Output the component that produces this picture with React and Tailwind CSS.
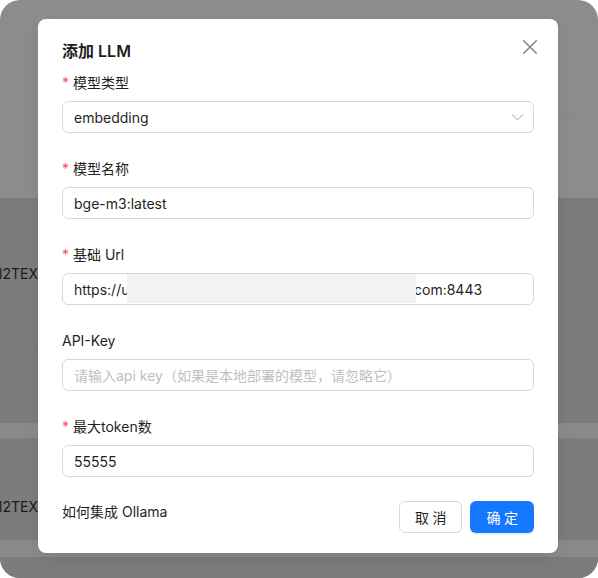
const font = { fontFamily: '"Inter", "Noto Sans CJK SC", "Noto Sans", sans-serif' };

const Label = ({ required, children }) => (
    <div className="flex items-center h-[22px] mb-2 text-[14px] text-[#1f1f1f]">
        {required && <span className="text-[#ff4d4f] mr-1 text-[14px] leading-none pt-[2px]">*</span>}
        {children}
    </div>
);

const Field = ({ label, required, children }) => (
    <div className="mb-6">
        <Label required={required}>{label}</Label>
        {children}
    </div>
);

const inputBox = 'relative h-8 w-full rounded-md border border-[#d9d9d9] bg-white px-[11px] flex items-center text-[14px] text-[#1f1f1f]';

export default function App() {
    return (
        <div className="w-[598px] h-[578px] bg-white" style={font}>
            <div className="relative w-full h-full rounded-[20px] overflow-hidden flex flex-col bg-[#8c8c8c]">
                {/* page behind the mask */}
                <div className="h-[115px] border-b border-[#868686]" />
                <div className="h-[83px]" />
                <div className="h-[150px] bg-[#7b7c7e] border-b border-[#757678] flex items-center">
                    <span className="text-[14px] text-[#1a1a1a] -ml-[1px] mt-[2px]">l2TEXT</span>
                </div>
                <div className="h-[75px] bg-[#7b7c7e]" />
                <div className="h-[15px] bg-[#8a8a8a]" />
                <div className="h-[102px] bg-[#7b7c7e] flex items-center">
                    <span className="text-[14px] text-[#1a1a1a] -ml-[1px] mt-[34px]">l2TEXT</span>
                </div>
                <div className="h-[17px] bg-[#8a8a8a]" />
                <div className="flex-1 bg-[#7b7c7e]" />

                {/* modal */}
                <div className="absolute left-[38px] top-[19px] w-[520px] h-[534px] rounded-lg bg-white px-6 pt-5 pb-5 shadow-[0_6px_16px_rgba(0,0,0,0.08)]">
                    <div className="relative flex items-center h-6 mb-2">
                        <h3 className="text-[16px] font-semibold text-[#1f1f1f]">添加 LLM</h3>
                        <svg className="absolute right-[-3px] top-[1px]" width="14" height="14" viewBox="0 0 14 14" fill="none">
                            <path d="M0.7 0.7L13.3 13.3M13.3 0.7L0.7 13.3" stroke="#7f7f7f" strokeWidth="1.4" strokeLinecap="round" />
                        </svg>
                    </div>

                    <Field label="模型类型" required>
                        <div className={`${inputBox} justify-between`}>
                            <span>embedding</span>
                            <svg width="11" height="7" viewBox="0 0 11 7" fill="none" className="mr-[-1px] mt-[1px]">
                                <path d="M0.6 0.8L5.5 5.9L10.4 0.8" stroke="#bfbfbf" strokeWidth="1.1" strokeLinecap="round" strokeLinejoin="round" />
                            </svg>
                        </div>
                    </Field>

                    <Field label="模型名称" required>
                        <div className={inputBox}>bge-m3:latest</div>
                    </Field>

                    <Field label="基础 Url" required>
                        <div className={`${inputBox} overflow-hidden`}>
                            <span className="whitespace-nowrap">https://u</span>
                            <span className="absolute left-[351px] top-0 bottom-0 flex items-center whitespace-nowrap">com:8443</span>
                            <div className="absolute left-[64px] top-0 bottom-[1px] w-[289px] bg-[#f2f2f2]" />
                        </div>
                    </Field>

                    <Field label="API-Key">
                        <div className={`${inputBox} text-[#bfbfbf]`}>
                            请输入api key（如果是本地部署的模型，请忽略它）
                        </div>
                    </Field>

                    <Field label="最大token数" required>
                        <div className={inputBox}>55555</div>
                    </Field>

                    <div className="flex items-start justify-between h-8">
                        <span className="text-[14px] leading-[22px] text-[#1f1f1f]">如何集成 Ollama</span>
                        <div className="flex gap-2">
                            <button className="h-8 w-[63px] rounded-md border border-[#d9d9d9] bg-white text-[14px] text-[#1f1f1f] tracking-[0.25em] pl-[4px]">
                                取消
                            </button>
                            <button className="h-8 w-[64px] rounded-md bg-[#1677ff] text-[14px] text-white tracking-[0.25em] pl-[4px] shadow-[0_2px_0_rgba(5,145,255,0.1)]">
                                确定
                            </button>
                        </div>
                    </div>
                </div>
            </div>
        </div>
    );
}
